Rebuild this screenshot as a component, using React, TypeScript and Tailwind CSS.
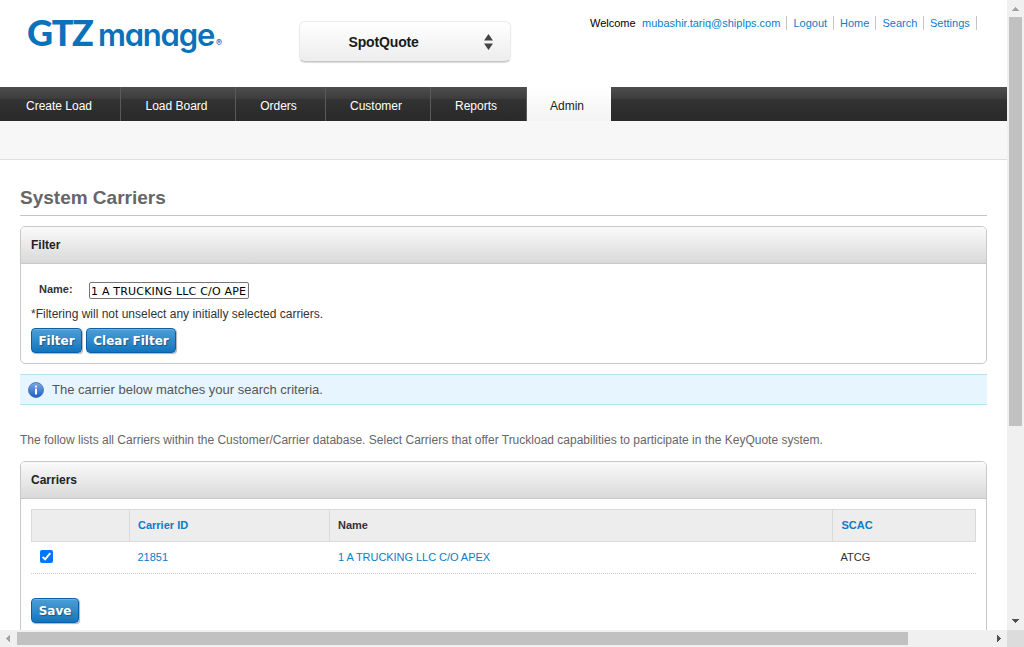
import type { ReactNode } from "react";

const tabs = [
  { label: "Create Load", width: "w-[121px] pr-[2px]" },
  { label: "Load Board", width: "w-[115px] pr-[3px]" },
  { label: "Orders", width: "w-[90px] pr-[4px]" },
  { label: "Customer", width: "w-[105px] pr-[4px]" },
  { label: "Reports", width: "w-[96px] pr-[5px]" },
];

const links = [
  { label: "mubashir.tariq@shiplps.com", box: "w-[145px]" },
  { label: "Logout", box: "w-[47px] pl-[6.5px]" },
  { label: "Home", box: "w-[42px] pl-[6px]" },
  { label: "Search", box: "w-[48px] pl-[6.5px]" },
  { label: "Settings", box: "w-[53px] pl-[6px]" },
];

function Panel({ title, className, children }: { title: string; className: string; children: ReactNode }) {
  return (
    <section className={`rounded-[5px] border border-[#c8c8c8] bg-white ${className}`}>
      <h2 className="h-[37px] rounded-t-[4px] border-b border-[#c8c8c8] bg-linear-to-b from-[#fafafa] to-[#d9d9d9] pl-[10px] text-xs leading-[37px] font-bold text-[#222]">
        {title}
      </h2>
      {children}
    </section>
  );
}

function Button({ width, children }: { width: string; children: ReactNode }) {
  return (
    <button
      className={`h-[25px] rounded-[4px] border border-[#0a5fa8] bg-linear-to-b from-[#4c9fd6] to-[#0f75bd] pt-px text-center font-['DejaVu_Sans',sans-serif] text-xs leading-[22px] font-bold whitespace-nowrap text-white shadow-[1px_1px_1px_rgba(0,0,0,0.3),inset_0_1px_0_rgba(255,255,255,0.2)] [text-shadow:1px_1px_1px_rgba(0,0,0,0.35)] ${width}`}
    >
      {children}
    </button>
  );
}

function Arrow({ points, color }: { points: string; color: string }) {
  return (
    <svg width="17" height="17" viewBox="0 0 17 17" className="block shrink-0" shapeRendering="crispEdges">
      <polygon points={points} fill={color} />
    </svg>
  );
}

function InfoIcon() {
  return (
    <svg width="16" height="16" viewBox="0 0 16 16" className="shrink-0">
      <defs>
        <linearGradient id="info" x1="0" y1="0" x2="0" y2="1">
          <stop offset="0" stopColor="#7fa9e6" />
          <stop offset="1" stopColor="#1f5fc4" />
        </linearGradient>
      </defs>
      <circle cx="8" cy="8" r="7.5" fill="url(#info)" stroke="#3f6cb4" strokeWidth="0.8" />
      <rect x="7" y="3.4" width="2" height="2" rx="0.6" fill="#fff" />
      <rect x="7" y="6.6" width="2" height="5.8" fill="#fff" />
    </svg>
  );
}

function Header() {
  return (
    <header className="flex h-[87px]">
      <div className="flex h-[60px] w-[299px] items-baseline pt-[7px] pl-[27px] whitespace-nowrap text-[#0b71b9]">
        <span className="w-[71px] font-['Lato',sans-serif] text-[36px] leading-[50px] font-black tracking-[-1.4px]">GTZ</span>
        <span className="w-[118px] font-['Inter',sans-serif] text-[31px] leading-[50px] font-semibold tracking-[-1.2px] [font-feature-settings:'cv11']">
          manage
        </span>
        <span className="font-['Inter',sans-serif] text-[9px] leading-none font-semibold">®</span>
      </div>
      <div className="mt-[21px] flex h-[41px] w-[212px] items-center rounded-[6px] border border-[#ebebeb] border-b-[#c8c8c8] bg-linear-to-b from-white to-[#ededed] pl-[48.5px] shadow-[0_1px_1px_rgba(0,0,0,0.15)]">
        <span className="w-[135px] text-sm leading-none font-bold tracking-[-0.15px] text-[#1a1a1a]">SpotQuote</span>
        <svg width="9" height="16" viewBox="0 0 9 16">
          <path d="M4.5 0l4.5 6.5H0zM4.5 16l4.5-6.5H0z" fill="#444" />
        </svg>
      </div>
      <nav className="mt-[16px] ml-[79px] flex h-[14px] text-[11px] leading-[14px] whitespace-nowrap">
        <span className="w-[52px] text-black">Welcome</span>
        {links.map((l) => (
          <a key={l.label} className={`border-r border-[#c4c4c4] text-[#0a7cc9] ${l.box}`}>
            {l.label}
          </a>
        ))}
      </nav>
    </header>
  );
}

function TabBar() {
  return (
    <nav className="flex h-[34px] bg-[linear-gradient(#4e4e4e,#3c3c3c_35%,#333_35%,#292929)] text-xs leading-[39px]">
      {tabs.map((t) => (
        <a key={t.label} className={`h-[34px] border-r border-[#5a5a5a] text-center text-white ${t.width}`}>
          {t.label}
        </a>
      ))}
      <a className="h-[34px] w-[84px] bg-linear-to-b from-white to-[#f3f3f3] pr-[4px] text-center text-[#222]">Admin</a>
    </nav>
  );
}

export default function App() {
  return (
    <div className="flex h-[647px] w-[1024px] flex-col overflow-hidden bg-white font-['Liberation_Sans',Arial,sans-serif]">
      <div className="flex h-[630px]">
        <main className="h-[630px] w-[1007px] overflow-hidden">
          <Header />
          <TabBar />
          <div className="h-[39px] border-b border-[#e0e0e0] bg-[#f7f7f7]" />
          <div className="px-5">
            <h1 className="h-[56px] border-b border-[#c4c4c4] pt-[27px] text-[19px] leading-[22px] font-bold text-[#666]">
              System Carriers
            </h1>
            <Panel title="Filter" className="mt-[10px] h-[138px]">
              <div className="px-[10px] pt-[18px]">
                <div className="flex h-[17px]">
                  <label className="w-[58px] pl-2 text-[11px] leading-[15px] font-bold text-[#333]">Name:</label>
                  <div className="h-[17px] w-[160px] overflow-hidden rounded-[2px] border border-[#767676] pt-px pl-px font-['DejaVu_Sans',sans-serif] text-[11px] leading-[16px] tracking-[0.2px] whitespace-nowrap text-black">
                    1 A TRUCKING LLC C/O APE
                  </div>
                </div>
                <p className="mt-[7px] h-[22px] text-xs leading-[16px] text-[#333]">
                  *Filtering will not unselect any initially selected carriers.
                </p>
                <div className="flex gap-1">
                  <Button width="w-[51px]">Filter</Button>
                  <Button width="w-[90px]">Clear Filter</Button>
                </div>
              </div>
            </Panel>
            <div className="mt-[10px] flex h-[31px] items-center gap-2 border-y border-[#b5e1f7] bg-[#e6f5ff] pl-2 text-[13px] leading-none text-[#555]">
              <InfoIcon />
              <span>The carrier below matches your search criteria.</span>
            </div>
            <p className="mt-[27px] h-[29px] text-xs leading-[16px] whitespace-nowrap text-[#666]">
              The follow lists all Carriers within the Customer/Carrier database. Select Carriers that offer Truckload
              capabilities to participate in the KeyQuote system.
            </p>
            <Panel title="Carriers" className="h-[200px]">
              <div className="p-[10px]">
                <div className="grid h-[33px] grid-cols-[98px_200px_503px_143px] border border-[#dadada] bg-[#ededed] text-[11px] leading-[31px] font-bold text-[#333]">
                  <span className="border-r border-[#dadada]" />
                  <span className="border-r border-[#dadada] pl-2 text-[#0a7cc9]">Carrier ID</span>
                  <span className="border-r border-[#dadada] pl-2">Name</span>
                  <span className="pl-[8.5px] text-[#0a7cc9]">SCAC</span>
                </div>
                <div className="grid h-[32px] grid-cols-[98.5px_200.5px_502.5px_143.5px] border-b border-dotted border-[#ccc] text-[11px] leading-[30px] text-[#333]">
                  <span className="flex items-start pt-[8px] pl-[9px]">
                    <svg width="13" height="13" viewBox="0 0 13 13">
                      <rect width="13" height="13" rx="2" fill="#0075ff" />
                      <path d="M2.6 6.8l2.5 2.6 5.2-6.3" fill="none" stroke="#fff" strokeWidth="1.9" />
                    </svg>
                  </span>
                  <span className="pl-2 text-[#0a7cc9]">21851</span>
                  <span className="pl-2 tracking-[-0.05px] text-[#0a7cc9]">1 A TRUCKING LLC C/O APEX</span>
                  <span className="pl-2">ATCG</span>
                </div>
                <div className="mt-6 flex">
                  <Button width="w-[48px]">Save</Button>
                </div>
              </div>
            </Panel>
          </div>
        </main>
        <div className="flex w-[17px] flex-col items-center bg-[#f0f0f0]">
          <Arrow points="5,11 12,11 8.5,7" color="#a3a3a3" />
          <div className="h-[409px] w-[13px] bg-[#c1c1c1]" />
          <div className="flex-1" />
          <Arrow points="5,6 12,6 8.5,10" color="#505050" />
        </div>
      </div>
      <div className="flex h-[17px] items-center bg-[#f0f0f0]">
        <Arrow points="10,5 10,12 6,8.5" color="#a3a3a3" />
        <div className="mr-auto h-[13px] w-[891px] bg-[#c1c1c1]" />
        <Arrow points="7,5 7,12 11,8.5" color="#505050" />
        <div className="h-[17px] w-[17px] bg-[#dcdcdc]" />
      </div>
    </div>
  );
}
